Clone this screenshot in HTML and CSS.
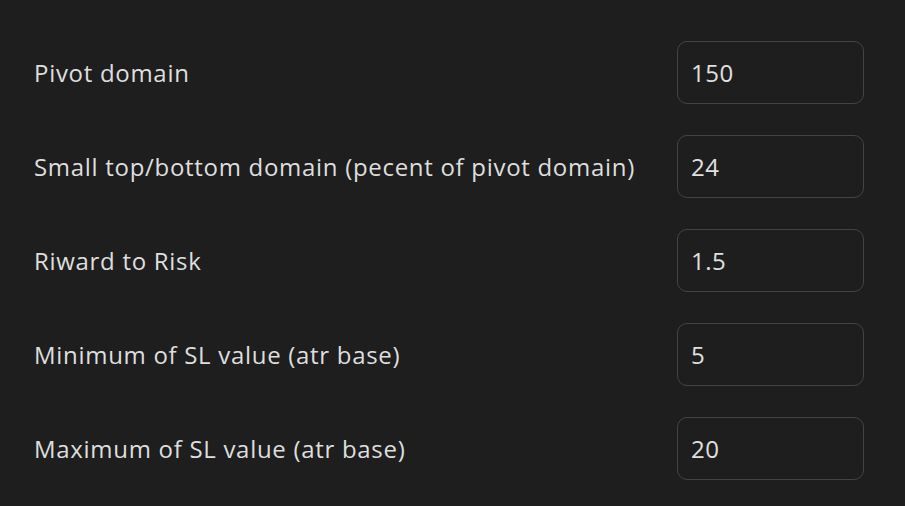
FILE: index.html
```html
<!DOCTYPE html>
<html lang="en">

<head>
	<meta charset="UTF-8">
	<meta name="viewport" content="width=device-width, initial-scale=1.0">
	<title>Strategy Inputs</title>
	<link rel="stylesheet" href="styles.css">
</head>

<body>
	<form class="settings">
		<div class="setting-row">
			<label for="pivotDomain">Pivot domain</label>
			<input type="text" id="pivotDomain" value="150">
		</div>
		<div class="setting-row">
			<label for="smallDomain">Small top/bottom domain (pecent of pivot domain)</label>
			<input type="text" id="smallDomain" value="24">
		</div>
		<div class="setting-row">
			<label for="rewardRisk">Riward to Risk</label>
			<input type="text" id="rewardRisk" value="1.5">
		</div>
		<div class="setting-row">
			<label for="minSl">Minimum of SL value (atr base)</label>
			<input type="text" id="minSl" value="5">
		</div>
		<div class="setting-row">
			<label for="maxSl">Maximum of SL value (atr base)</label>
			<input type="text" id="maxSl" value="20">
		</div>
	</form>
</body>

</html>
```

FILE: styles.css
```css
/* Base reset */
* {
	margin: 0;
	padding: 0;
	box-sizing: border-box;
	font-family: 'Open Sans', 'DejaVu Sans', sans-serif;
}

body {
	background: #1e1e1e;
	color: #dedede;
}

.settings {
	display: flex;
	flex-direction: column;
	gap: 31px;
	padding: 41px 41px 0 34px;
}

.setting-row {
	display: flex;
	align-items: center;
	justify-content: space-between;
}

.setting-row label {
	font-size: 24px;
	letter-spacing: 0.7px;
}

.setting-row input {
	width: 187px;
	height: 63px;
	padding: 0 13px;
	font-size: 24px;
	letter-spacing: 0.5px;
	color: #e0e0e0;
	background: #1e1e1e;
	border: 1px solid #444;
	border-radius: 10px;
}

.setting-row input:focus {
	outline: none;
	border-color: #666;
}
```
